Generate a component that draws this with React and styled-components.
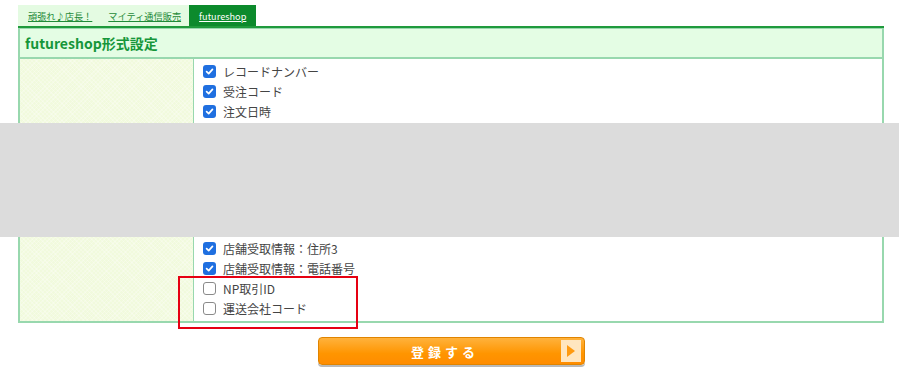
import styled, { createGlobalStyle } from 'styled-components'

const GlobalStyle = createGlobalStyle`
  body {
    margin: 0;
    background: #fff;
    font-family: "Noto Sans CJK JP", "Noto Sans", sans-serif;
  }
`

const topItems = ['レコードナンバー', '受注コード', '注文日時']
const bottomItems = [
  { label: '店舗受取情報：住所3', checked: true },
  { label: '店舗受取情報：電話番号', checked: true },
  { label: 'NP取引ID', checked: false },
  { label: '運送会社コード', checked: false },
]

function CheckRow({ label, checked }) {
  return (
    <Row>
      <Box $checked={checked}>
        {checked && (
          <svg width='9' height='9' viewBox='0 0 10 10'>
            <path d='M1.8 5.2 L4.1 7.4 L8.3 2.6' fill='none' stroke='#fff' strokeWidth='1.9' strokeLinecap='round' strokeLinejoin='round' />
          </svg>
        )}
      </Box>
      <span>{label}</span>
    </Row>
  )
}

function App() {
  return (
    <Page>
      <GlobalStyle />
      <Tabs>
        <Tab>頑張れ♪店長！</Tab>
        <Tab>マイティ通信販売</Tab>
        <Tab $active>futureshop</Tab>
      </Tabs>
      <Table>
        <Header>futureshop形式設定</Header>
        <Body>
          <LeftCell />
          <RightCell>
            {topItems.map((t) => (
              <CheckRow key={t} label={t} checked />
            ))}
            <Hidden />
            {bottomItems.map((t) => (
              <CheckRow key={t.label} label={t.label} checked={t.checked} />
            ))}
          </RightCell>
        </Body>
      </Table>
      <Actions>
        <SubmitButton>
          <span className='label'>登録する</span>
          <span className='arrow'>
            <svg width='10' height='14' viewBox='0 0 10 14'>
              <path d='M1 1 L9 7 L1 13 Z' fill='#ff9a10' />
            </svg>
          </span>
        </SubmitButton>
      </Actions>
      <Mask />
      <Highlight />
    </Page>
  )
}

const Page = styled.div`
  position: relative;
  width: 900px;
  height: 381px;
  overflow: hidden;
  padding: 5px 0 0 18px;
  box-sizing: border-box;
`

const Tabs = styled.div`
  display: flex;
  width: max-content;
  background: #e4fbe2;
  height: 21px;
`

const Tab = styled.a`
  display: flex;
  align-items: center;
  padding: 0 ${(p) => (p.$active ? '10px' : '8px')};
  font-size: 9.2px;
  text-decoration: underline;
  color: ${(p) => (p.$active ? '#fff' : '#1f8a38')};
  background: ${(p) => (p.$active ? '#0c8a2c' : 'transparent')};
  &:first-child {
    padding-left: 10px;
  }
`

const Table = styled.div`
  width: 866px;
  border-top: 2px solid #1f9a3c;
`

const Header = styled.div`
  height: 28px;
  display: flex;
  align-items: center;
  padding-left: 5px;
  background: #e4fde4;
  border: 2px solid #98d8ae;
  border-top-width: 1px;
  font-size: 14px;
  font-weight: bold;
  color: #16963a;
`

const Body = styled.div`
  display: flex;
  border: 2px solid #98d8ae;
  border-top: none;
`

const LeftCell = styled.div`
  width: 173px;
  border-right: 1px solid #98d8ae;
  background-color: #f1fadd;
  background-image:
    repeating-linear-gradient(45deg, rgba(255, 255, 255, 0.25) 0 1px, transparent 1px 3px),
    repeating-linear-gradient(-45deg, rgba(255, 255, 255, 0.25) 0 1px, transparent 1px 3px);
`

const RightCell = styled.div`
  flex: 1;
  padding: 2px 0 3px 9px;
  background: #fff;
`

const Row = styled.div`
  height: 20px;
  display: flex;
  align-items: center;
  gap: 7px;
  font-size: 12px;
  color: #444;
`

const Box = styled.span`
  width: 13px;
  height: 13px;
  box-sizing: border-box;
  border-radius: 3px;
  display: flex;
  align-items: center;
  justify-content: center;
  background: ${(p) => (p.$checked ? '#1f6fe0' : '#fff')};
  border: ${(p) => (p.$checked ? 'none' : '1px solid #8a8a8a')};
`

const Hidden = styled.div`
  height: 117px;
`

const Actions = styled.div`
  width: 866px;
  display: flex;
  justify-content: center;
  padding-top: 14px;
`

const SubmitButton = styled.button`
  position: relative;
  width: 267px;
  height: 28px;
  border: 1px solid #e08400;
  border-radius: 4px;
  padding: 0 12px 0 0;
  display: flex;
  align-items: center;
  justify-content: center;
  background: linear-gradient(#ffb23c, #ff9500 60%, #ff8c00);
  box-shadow: 0 2px 0 #b9b9b9;
  cursor: pointer;
  .label {
    color: #fff;
    font-weight: bold;
    font-size: 13px;
    letter-spacing: 4px;
    font-family: "Noto Sans CJK JP", sans-serif;
  }
  .arrow {
    position: absolute;
    right: 3px;
    top: 2px;
    width: 20px;
    height: 22px;
    background: #ffe6c0;
    display: flex;
    align-items: center;
    justify-content: center;
  }
`

const Mask = styled.div`
  position: absolute;
  left: 0;
  top: 123px;
  width: 899px;
  height: 114px;
  background: #dcdcdc;
`

const Highlight = styled.div`
  position: absolute;
  left: 178px;
  top: 276px;
  width: 180px;
  height: 53px;
  box-sizing: border-box;
  border: 2px solid #e60012;
`

export default App
